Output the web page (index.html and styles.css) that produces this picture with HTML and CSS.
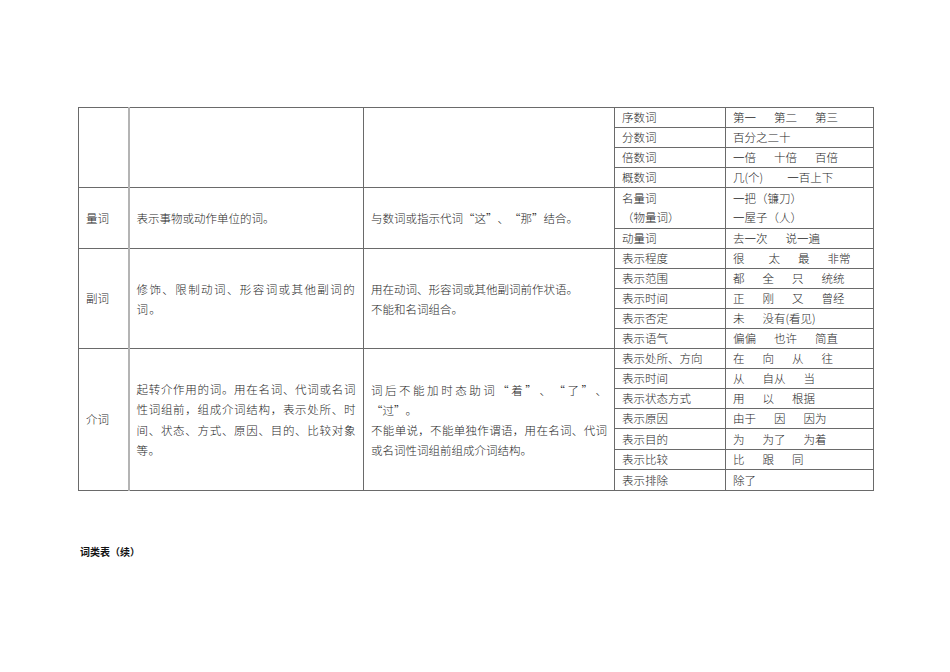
FILE: index.html
```html
<!DOCTYPE html>
<html lang="zh-CN">
<head>
<meta charset="utf-8">
<title>词类表</title>
<link rel="stylesheet" href="styles.css">
</head>
<body>
<div class="page">
<table class="wordtable">
<colgroup><col class="c1"><col class="c2"><col class="c3"><col class="c4"><col class="c5"></colgroup>
<tbody>
<tr class="r"><td rowspan="4" class="cat"></td><td rowspan="4" class="desc"></td><td rowspan="4" class="use"></td><td class="sub">序数词</td><td class="ex"><div class="terms"><span>第一</span><span>第二</span><span>第三</span></div></td></tr>
<tr class="r"><td class="sub">分数词</td><td class="ex"><div class="terms"><span>百分之二十</span></div></td></tr>
<tr class="r"><td class="sub">倍数词</td><td class="ex"><div class="terms"><span>一倍</span><span>十倍</span><span>百倍</span></div></td></tr>
<tr class="r"><td class="sub">概数词</td><td class="ex"><div class="terms"><span>几(个)</span><span class="wide">一百上下</span></div></td></tr>

<tr class="r2"><td rowspan="2" class="cat">量词</td><td rowspan="2" class="desc">表示事物或动作单位的词。</td><td rowspan="2" class="use">与数词或指示代词<span class="ql">“</span>这<span class="qr">”</span>、<span class="ql">“</span>那<span class="qr">”</span>结合。</td><td class="sub">名量词<br>（物量词）</td><td class="ex">一把（镰刀）<br>一屋子（人）</td></tr>
<tr class="r"><td class="sub">动量词</td><td class="ex"><div class="terms"><span>去一次</span><span>说一遍</span></div></td></tr>

<tr class="r"><td rowspan="5" class="cat">副词</td><td rowspan="5" class="desc spread">修饰、限制动词、形容词或其他副词的词。</td><td rowspan="5" class="use">用在动词、形容词或其他副词前作状语。<br>不能和名词组合。</td><td class="sub">表示程度</td><td class="ex"><div class="terms"><span>很</span><span class="wide">太</span><span>最</span><span>非常</span></div></td></tr>
<tr class="r"><td class="sub">表示范围</td><td class="ex"><div class="terms"><span>都</span><span>全</span><span>只</span><span>统统</span></div></td></tr>
<tr class="r"><td class="sub">表示时间</td><td class="ex"><div class="terms"><span>正</span><span>刚</span><span>又</span><span>曾经</span></div></td></tr>
<tr class="r"><td class="sub">表示否定</td><td class="ex"><div class="terms"><span>未</span><span>没有(看见)</span></div></td></tr>
<tr class="r"><td class="sub">表示语气</td><td class="ex"><div class="terms"><span>偏偏</span><span>也许</span><span>简直</span></div></td></tr>

<tr class="r"><td rowspan="7" class="cat">介词</td><td rowspan="7" class="desc spread-s">起转介作用的词。用在名词、代词或名词性词组前，组成介词结构，表示处所、时间、状态、方式、原因、目的、比较对象等。</td><td rowspan="7" class="use"><span class="fullline">词后不能加时态助词<span class="ql">“</span>着<span class="qr">”</span>、<span class="ql">“</span>了<span class="qr">”</span>、</span><span class="ql">“</span>过<span class="qr">”</span>。<br>不能单说，不能单独作谓语，用在名词、代词或名词性词组前组成介词结构。</td><td class="sub">表示处所、方向</td><td class="ex"><div class="terms"><span>在</span><span>向</span><span>从</span><span>往</span></div></td></tr>
<tr class="r"><td class="sub">表示时间</td><td class="ex"><div class="terms"><span>从</span><span>自从</span><span>当</span></div></td></tr>
<tr class="r"><td class="sub">表示状态方式</td><td class="ex"><div class="terms"><span>用</span><span>以</span><span>根据</span></div></td></tr>
<tr class="r"><td class="sub">表示原因</td><td class="ex"><div class="terms"><span>由于</span><span>因</span><span>因为</span></div></td></tr>
<tr class="r tall"><td class="sub">表示目的</td><td class="ex"><div class="terms"><span>为</span><span>为了</span><span>为着</span></div></td></tr>
<tr class="r"><td class="sub">表示比较</td><td class="ex"><div class="terms"><span>比</span><span>跟</span><span>同</span></div></td></tr>
<tr class="r tall"><td class="sub">表示排除</td><td class="ex"><div class="terms"><span>除了</span></div></td></tr>
</tbody>
</table>
<p class="caption">词类表（续）</p>
</div>
</body>
</html>
```

FILE: styles.css
```css
html, body {
  margin: 0;
  background: #ffffff;
}

body {
  font-family: "Noto Sans CJK SC", "Liberation Serif", sans-serif;
  font-size: 11.5px;
  color: #1f1f1f;
}

.page {
  padding: 107px 0 0 78px;
}

.wordtable {
  border-collapse: collapse;
  table-layout: fixed;
  width: 795px;
}

.c1 { width: 50px; }
.c2 { width: 235px; }
.c3 { width: 251px; }
.c4 { width: 111px; }
.c5 { width: 148px; }

.wordtable td {
  border: 1px solid #6a6a6a;
  padding: 0 7px;
  line-height: 19px;
  vertical-align: middle;
  font-weight: 300;
}

.wordtable td.desc {
  border-left: 2px solid #b4b4b4;
}

.r { height: 20px; }
.r.tall { height: 21px; }
.r2 { height: 41px; }

.cat { padding-left: 6px; }

.desc, .use {
  text-align: justify;
}

.wordtable td.desc, .wordtable td.use {
  line-height: 20px;
}

.ql, .qr {
  display: inline-block;
  width: 1em;
}

.ql { text-align: right; }
.qr { text-align: left; }

.spread { letter-spacing: 1.3px; }
.wordtable td.spread-s { letter-spacing: 0.6px; line-height: 20.5px; }

.fullline {
  display: block;
  text-align: justify;
  text-align-last: justify;
}

.terms {
  display: flex;
  column-gap: 18px;
  white-space: nowrap;
}

.terms .wide { margin-left: 6px; }

.caption {
  margin: 53px 0 0 2px;
  font-size: 10px;
  font-weight: bold;
  color: #111;
}
```
